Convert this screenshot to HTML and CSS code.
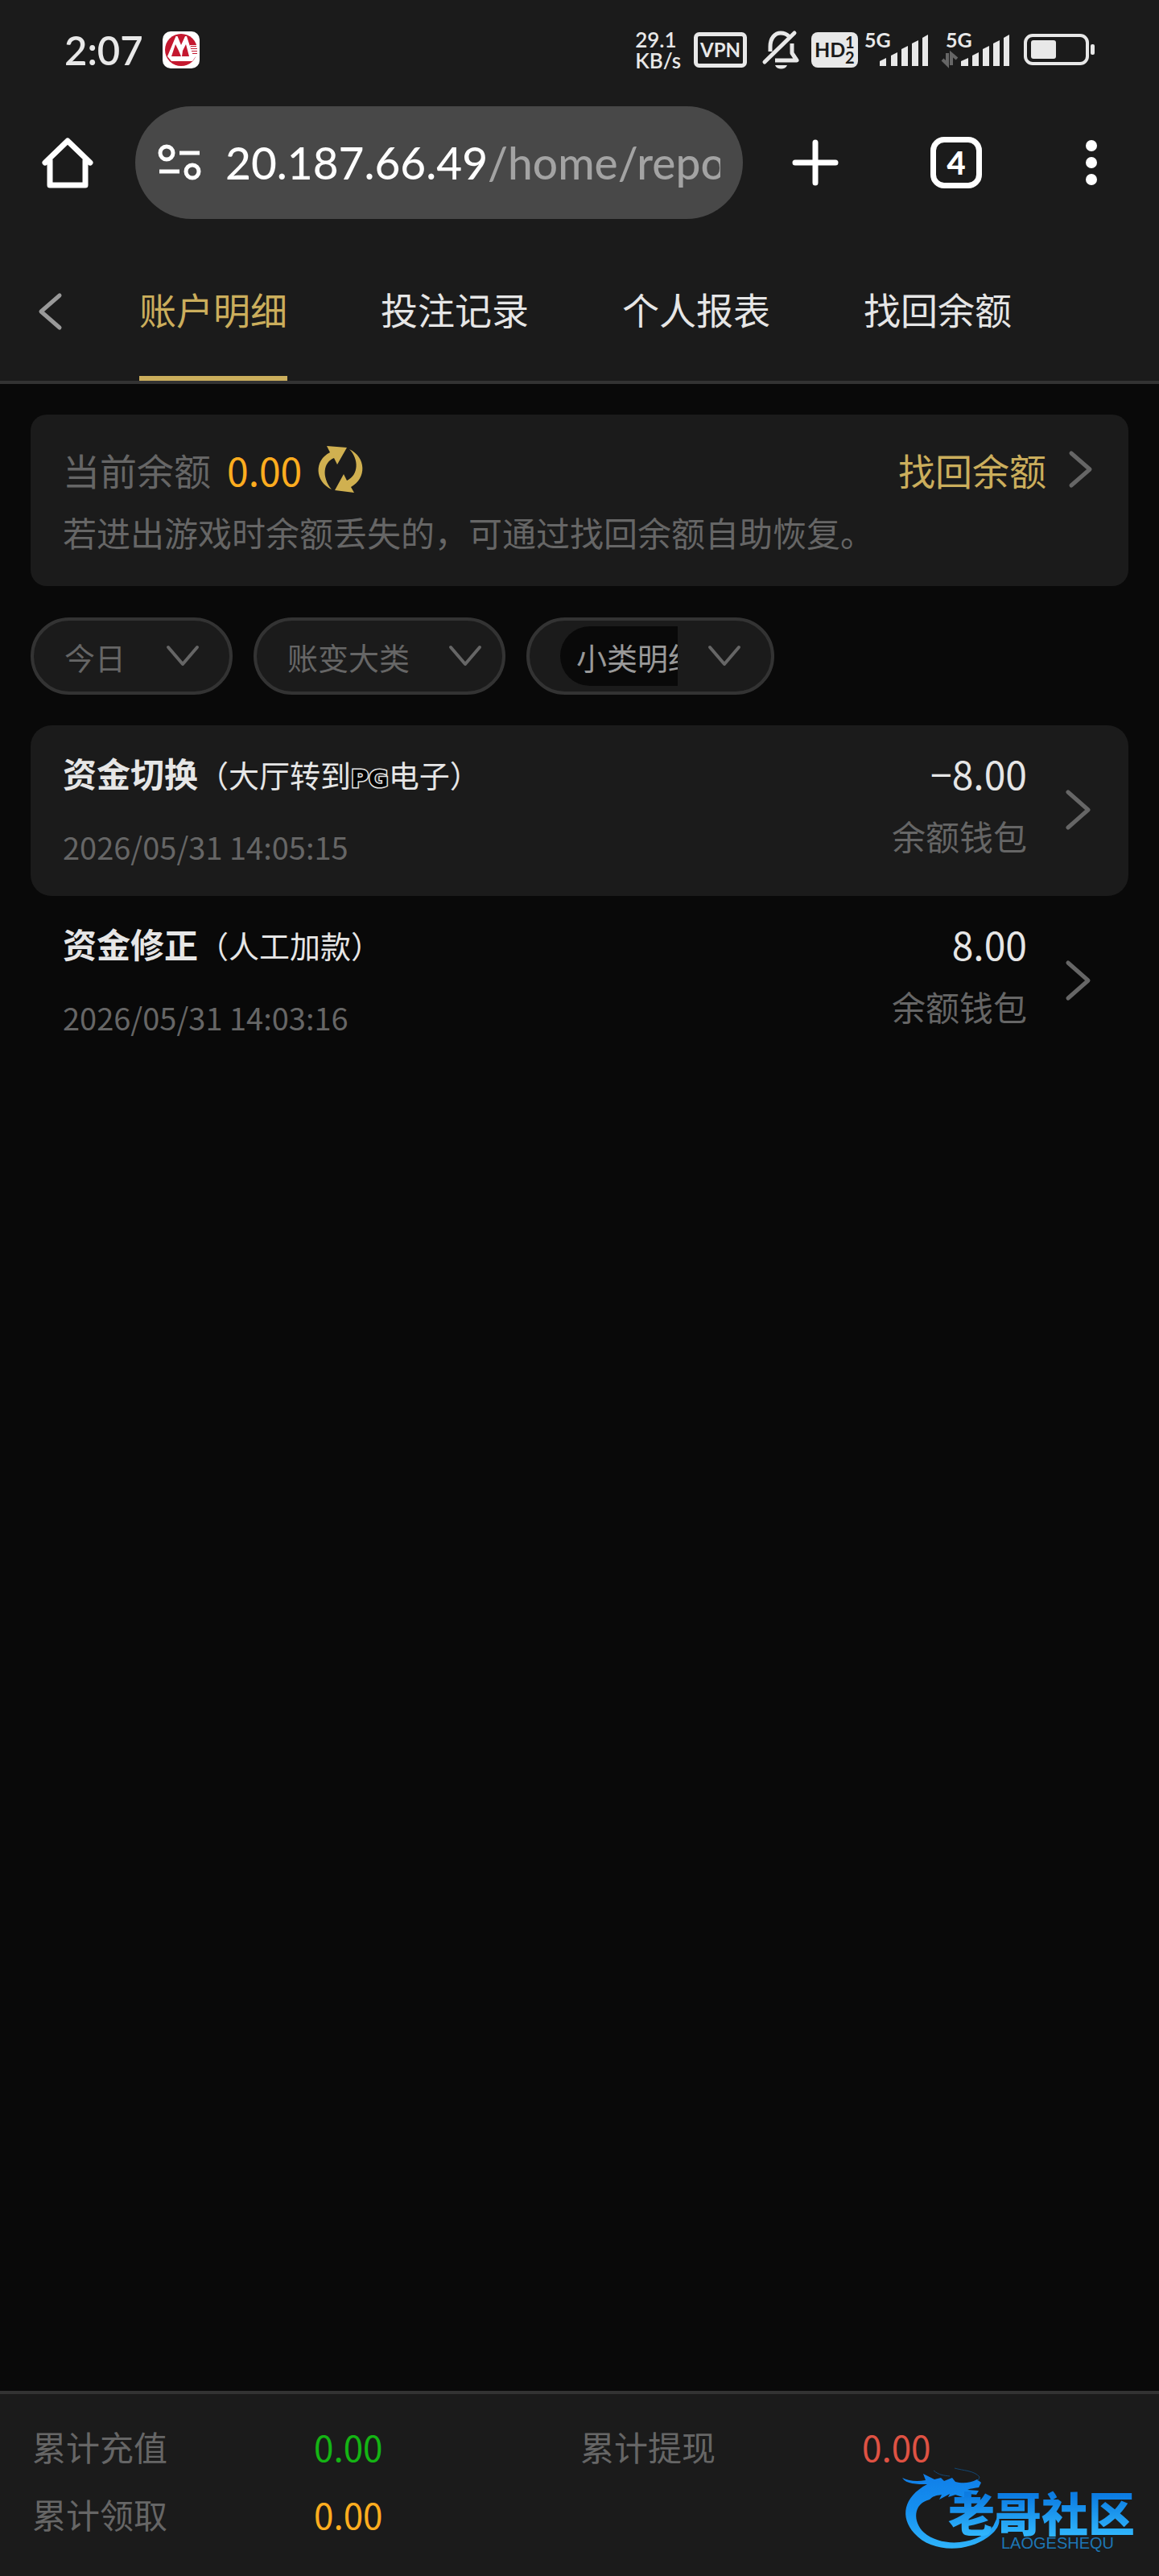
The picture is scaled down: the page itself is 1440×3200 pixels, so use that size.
FILE: index.html
```html
<!DOCTYPE html>
<html lang="zh-CN">
<head>
<meta charset="utf-8">
<meta name="viewport" content="width=device-width, initial-scale=1">
<title>账户明细</title>
<link rel="stylesheet" href="styles.css">
</head>
<body>
<header class="device">
  <div class="status">
    <div class="status-left">
      <time class="clock">2:07</time>
      <svg class="app-badge" width="46" height="46" viewBox="0 0 46 46" aria-hidden="true">
        <rect width="46" height="46" rx="10" fill="#fff"/>
        <circle cx="23" cy="23" r="20" fill="#c4182f"/>
        <path d="M6 31 16.500 6h2L23 17l5-11h2l8 25 4-1-5 7H11l-5-6z" fill="#fff"/>
        <path d="M11 31l5-15 4 8 3 7zM24 31l1-7 4-8 4 15z" fill="#c4182f"/>
        <path d="M34 17h10v14H36z" fill="#fff"/>
        <path d="M35 18.500h7M35 21.500h8M36 24.500h7M37 27.500h6" stroke="#c4182f" stroke-width="1.200"/>
      </svg>
    </div>
    <div class="status-right">
      <div class="speed"><span>29.1</span><span>KB/s</span></div>
      <svg width="66" height="44" viewBox="0 0 66 44" role="img" aria-label="VPN">
        <rect x="2.500" y="2.500" width="61" height="39" rx="4" fill="none" stroke="#e8e8e8" stroke-width="5"/>
        <text class="icon-text" x="33" y="31" font-size="24" text-anchor="middle" fill="#e8e8e8">VPN</text>
      </svg>
      <svg width="48" height="50" viewBox="0 0 48 50" aria-hidden="true">
        <path d="M13 27V21C13 10 19 4 26 4c5 0 8 2 10 4M40 17v12l6 9H19" fill="none" stroke="#e8e8e8" stroke-width="5" stroke-linejoin="round"/>
        <path d="M43 4 6 40" stroke="#e8e8e8" stroke-width="5" stroke-linecap="round"/>
        <path d="M19 44h15c-2 6-13 6-15 0z" fill="#e8e8e8"/>
      </svg>
      <div class="carrier">
        <svg width="58" height="44" viewBox="0 0 58 44" role="img" aria-label="HD">
          <rect width="58" height="44" rx="8" fill="#e8e8e8"/>
          <text class="icon-text" x="4" y="31" font-size="25" fill="#1a1a1a">HD</text>
          <text class="icon-text" x="42" y="20" font-size="20" fill="#1a1a1a">1</text>
          <text class="icon-text" x="42" y="39" font-size="20" fill="#1a1a1a">2</text>
        </svg>
        <svg width="80" height="44" viewBox="0 0 80 44" role="img" aria-label="5G">
          <text class="icon-text" x="0" y="19" font-size="25" fill="#e8e8e8">5G</text>
          <path d="M19 42v-6l8-4v10zM33 42V29l8-4v17zM46 42V21l8-4v25zM59 42V14l8-4v32zM72 42V7l7-4v39z" fill="#e8e8e8"/>
        </svg>
      </div>
      <svg width="86" height="44" viewBox="0 0 86 44" role="img" aria-label="5G">
        <text class="icon-text" x="5" y="19" font-size="25" fill="#e8e8e8">5G</text>
        <path d="M7 26v14L1 34M12 41V27l7 6" fill="none" stroke="#666" stroke-width="4"/>
        <path d="M24 42v-6l9-4v10zM38 42V29l8-4v17zM51 42V21l8-4v25zM64 42V14l8-4v32zM77 42V7l7-4v39z" fill="#e8e8e8"/>
      </svg>
      <svg width="88" height="40" viewBox="0 0 88 40" role="img" aria-label="电量">
        <rect x="2" y="2" width="77" height="35" rx="9" fill="none" stroke="#e8e8e8" stroke-width="4"/>
        <rect x="9" y="8" width="31" height="23" rx="3" fill="#e8e8e8"/>
        <rect x="83" y="13" width="5" height="13" rx="2" fill="#e8e8e8"/>
      </svg>
    </div>
  </div>
  <div class="toolbar">
    <button class="tool" type="button" aria-label="主页">
      <svg width="64" height="64" viewBox="0 0 64 64"><path d="M4 32 32 5l28 27M10 29v31h44V29" fill="none" stroke="#fff" stroke-width="7" stroke-linejoin="round" stroke-linecap="round"/></svg>
    </button>
    <div class="address">
      <svg width="54" height="44" viewBox="0 0 54 44" aria-hidden="true">
        <circle cx="11" cy="10" r="8" fill="none" stroke="#fff" stroke-width="5"/>
        <path d="M27 10h25M2 33h25" stroke="#fff" stroke-width="5"/>
        <circle cx="43" cy="33" r="8" fill="none" stroke="#fff" stroke-width="5"/>
      </svg>
      <input class="url" type="text" aria-label="网址" value="20.187.66.49/home/report">
    </div>
    <div class="tools">
      <button class="tool" type="button" aria-label="新标签页">
        <svg width="56" height="56" viewBox="0 0 56 56"><path d="M28 3v50M3 28h50" stroke="#fff" stroke-width="7" stroke-linecap="round"/></svg>
      </button>
      <button class="tool tab-count" type="button" aria-label="4 个标签页">4</button>
      <button class="tool more" type="button" aria-label="更多">
        <svg width="14" height="56" viewBox="0 0 14 56"><g fill="#fff"><circle cx="7" cy="7" r="7"/><circle cx="7" cy="28" r="7"/><circle cx="7" cy="49" r="7"/></g></svg>
      </button>
    </div>
  </div>
</header>

<nav class="nav">
  <a class="back" href="#" aria-label="返回">
    <svg width="30" height="46" viewBox="0 0 30 46"><path d="M27 3 4 23l23 20" fill="none" stroke="#999" stroke-width="5" stroke-linecap="round" stroke-linejoin="round"/></svg>
  </a>
  <div class="tabs">
    <a class="tab tab-active" href="#" aria-current="page">账户明细</a>
    <a class="tab" href="#">投注记录</a>
    <a class="tab" href="#">个人报表</a>
    <a class="tab" href="#">找回余额</a>
  </div>
</nav>

<main class="main">
  <section class="card">
    <div class="balance">
      <span class="muted">当前余额</span>
      <span class="amount-gold">0.00</span>
      <button class="refresh" type="button" aria-label="刷新余额">
        <svg width="56" height="58" viewBox="0 0 56 58" fill="#d0b050">
          <path d="M11 0 36 2 24 23 20 15C7 20 4 38 17 54 -4 44-5 18 15 8z"/>
          <path d="M39 4C60 14 61 40 41 51L45 58 21 55 32 35 36 43C51 36 51 16 39 4z"/>
        </svg>
      </button>
      <a class="recover" href="#">找回余额
        <svg width="30" height="46" viewBox="0 0 30 46"><path d="M3 3l23 20L3 43" fill="none" stroke="#666" stroke-width="5" stroke-linecap="round" stroke-linejoin="round"/></svg>
      </a>
    </div>
    <p class="hint">若进出游戏时余额丢失的，可通过找回余额自助恢复。</p>
  </section>

  <form class="filters">
    <div class="pill">
      <select aria-label="日期"><option>今日</option></select>
      <svg width="40" height="26" viewBox="0 0 40 26"><path d="M2 2l18 21L38 2" fill="none" stroke="#666" stroke-width="4" stroke-linecap="round" stroke-linejoin="round"/></svg>
    </div>
    <div class="pill pill-wide">
      <select aria-label="账变大类"><option>账变大类</option></select>
      <svg width="40" height="26" viewBox="0 0 40 26"><path d="M2 2l18 21L38 2" fill="none" stroke="#666" stroke-width="4" stroke-linecap="round" stroke-linejoin="round"/></svg>
    </div>
    <div class="pill pill-inset">
      <select aria-label="小类明细"><option>小类明细</option></select>
      <svg width="40" height="26" viewBox="0 0 40 26"><path d="M2 2l18 21L38 2" fill="none" stroke="#666" stroke-width="4" stroke-linecap="round" stroke-linejoin="round"/></svg>
    </div>
  </form>

  <ul class="records">
    <li>
      <a class="record" href="#">
        <div class="what">
          <div class="title"><strong>资金切换</strong>（大厅转到<b class="pg">PG</b>电子）</div>
          <time class="date">2026/05/31 14:05:15</time>
        </div>
        <div class="sum">
          <span class="money">−8.00</span>
          <span class="wallet">余额钱包</span>
        </div>
        <svg width="32" height="50" viewBox="0 0 32 50"><path d="M3 3l25 22L3 47" fill="none" stroke="#666" stroke-width="5" stroke-linecap="round" stroke-linejoin="round"/></svg>
      </a>
    </li>
    <li>
      <a class="record" href="#">
        <div class="what">
          <div class="title"><strong>资金修正</strong>（人工加款）</div>
          <time class="date">2026/05/31 14:03:16</time>
        </div>
        <div class="sum">
          <span class="money">8.00</span>
          <span class="wallet">余额钱包</span>
        </div>
        <svg width="32" height="50" viewBox="0 0 32 50"><path d="M3 3l25 22L3 47" fill="none" stroke="#666" stroke-width="5" stroke-linecap="round" stroke-linejoin="round"/></svg>
      </a>
    </li>
  </ul>
</main>

<footer class="totals">
  <dl class="totals-grid">
    <div class="total"><dt>累计充值</dt><dd class="green">0.00</dd></div>
    <div class="total"><dt>累计提现</dt><dd class="red">0.00</dd></div>
    <div class="total"><dt>累计领取</dt><dd class="orange">0.00</dd></div>
  </dl>
  <svg class="brand" width="340" height="140" viewBox="0 0 340 140" role="img" aria-label="老哥社区">
    <defs>
      <linearGradient id="blue" gradientUnits="userSpaceOnUse" x1="0" y1="10" x2="0" y2="106">
        <stop offset="0" stop-color="#0f7de8"/><stop offset=".5" stop-color="#1590f0"/><stop offset="1" stop-color="#2fb4fb"/>
      </linearGradient>
      <linearGradient id="name" gradientUnits="userSpaceOnUse" x1="0" y1="40" x2="0" y2="88">
        <stop offset="0" stop-color="#0c7ce2"/><stop offset="1" stop-color="#2fb4fb"/>
      </linearGradient>
    </defs>
    <path fill="url(#blue)" d="M21 18c8 4 18 5 29 3l-3-8 14 7 8-2 4 4 10-4 4 5c8 2 18 2 27-3l5 4-3 6c-5 1-10 1-14 3l14 1-3 5-10-1-4 5-12-4-9 3 2-4-13 7 3-6c-8 1-11 2-15 6C34 50 34 73 48 86c22 19 66 16 86-8l6-13c5 10-3 20-13 27-28 20-71 18-91-5C18 67 22 42 52 26c-13 0-26 0-31-8z"/>
    <path fill="none" stroke="#134672" stroke-width="1" d="M60 9c7 6 13 6 20 7M86 6c10 3 25 3 31 11l-2 5"/>
    <text class="brand-name" x="78" y="85" font-size="58" fill="url(#name)">老哥社区</text>
    <text class="brand-latin" x="144" y="106" font-size="20" fill="#1d76b5">LAOGESHEQU</text>
  </svg>
</footer>
</body>
</html>
```
FILE: styles.css
```css
* {
  box-sizing: border-box;
}

body {
  margin: 0;
  min-height: 100vh;
  display: flex;
  flex-direction: column;
  background: #090909;
  color: #e6e6e6;
  font-family: "Noto Sans CJK SC", sans-serif;
  font-size: 42px;
}

a {
  color: inherit;
  text-decoration: none;
}

svg {
  display: block;
  flex: none;
  overflow: visible;
}

button,
input,
select {
  margin: 0;
  padding: 0;
  border: 0;
  background: none;
  color: inherit;
  font: inherit;
}

/* Status bar and browser toolbar */

.device {
  background: #1b1b1b;
  color: #e8e8e8;
  font-family: Lato, sans-serif;
}

.status {
  display: flex;
  justify-content: space-between;
  align-items: center;
  height: 124px;
  padding: 0 80px;
}

.status-left {
  display: flex;
  align-items: center;
  gap: 24px;
}

.clock {
  font-size: 49px;
  font-weight: 600;
}

.status-right {
  display: flex;
  align-items: center;
  gap: 16px;
}

.carrier {
  display: flex;
  gap: 8px;
}

.speed {
  display: flex;
  flex-direction: column;
  font-size: 26px;
  font-weight: 600;
  line-height: 26px;
}

.icon-text {
  font-family: Lato, sans-serif;
  font-weight: 700;
}

.toolbar {
  display: flex;
  align-items: center;
  gap: 52px;
  padding: 8px 77px 28px 52px;
}

.address {
  flex: 1;
  min-width: 0;
  display: flex;
  align-items: center;
  gap: 30px;
  height: 140px;
  padding: 0 28px;
  border-radius: 70px;
  background: #484848;
}

.url {
  flex: 1;
  min-width: 0;
  height: 80px;
  font-size: 55px;
  font-weight: 500;
  color: transparent;
  background: linear-gradient(to right, #fff 325px, #a3a3a3 325px);
  background-clip: text;
}

.tools {
  display: flex;
  align-items: center;
  gap: 115px;
  padding-left: 10px;
}

.tool {
  display: grid;
  place-items: center;
  color: #fff;
}

.more {
  padding-left: 14px;
}

.tab-count {
  width: 64px;
  height: 64px;
  border: 7px solid #fff;
  border-radius: 17px;
  font-size: 40px;
  font-weight: 900;
  line-height: 48px;
}

/* Page navigation */

.nav {
  display: flex;
  align-items: center;
  background: #1b1b1b;
  border-bottom: 4px solid #333;
  font-size: 46px;
}

.back {
  padding: 0 96px 0 47px;
}

.tabs {
  display: flex;
  gap: 116px;
}

.tab {
  line-height: 167px;
  border-bottom: 6px solid transparent;
}

.tab-active {
  color: #cbae5c;
  border-bottom-color: #cbae5c;
}

/* Content */

.main {
  flex: 1;
  padding: 38px;
}

.card {
  padding: 32px 44px 33px 40px;
  border-radius: 20px;
  background: #1b1b1b;
}

.balance {
  display: flex;
  align-items: center;
  gap: 20px;
  font-size: 46px;
  line-height: 72px;
}

.muted,
.hint {
  color: #666;
}

.amount-gold {
  color: #ffad1f;
  font-size: 48px;
}

.recover {
  display: flex;
  align-items: center;
  gap: 28px;
  margin-left: auto;
  color: #cbae5c;
}

.hint {
  margin: 8px 0 0;
  line-height: 68px;
}

.filters {
  display: flex;
  gap: 26px;
  margin: 39px 0 38px;
  font-size: 38px;
}

.pill {
  display: flex;
  align-items: center;
  gap: 50px;
  height: 96px;
  padding: 0 38px;
  border: 4px solid #333;
  border-radius: 48px;
  background: #1b1b1b;
  color: #666;
}

.pill select {
  appearance: none;
  height: 74px;
}

.pill-wide {
  gap: 48px;
  padding-right: 26px;
}

.pill-inset {
  gap: 38px;
}

.pill-inset select {
  width: 146px;
  padding-left: 20px;
  border-radius: 37px 0 0 37px;
  background: #090909;
  color: #999;
}

.records {
  margin: 0;
  padding: 0;
  list-style: none;
}

.record {
  display: flex;
  align-items: center;
  padding: 30px 46px 32px 40px;
  border-radius: 26px;
  line-height: 58px;
}

.records li:nth-child(odd) .record {
  background: #1b1b1b;
}

.what {
  display: flex;
  flex-direction: column;
  gap: 32px;
}

.title {
  font-size: 38px;
}

.title strong {
  font-size: 42px;
}

.pg {
  color: #000;
  font-family: "DejaVu Sans", sans-serif;
  font-size: 30px;
  line-height: 30px;
  -webkit-text-stroke: 3px #e6e6e6;
  paint-order: stroke fill;
}

.date {
  color: #666;
  font-size: 38px;
}

.sum {
  align-self: flex-start;
  display: flex;
  flex-direction: column;
  align-items: flex-end;
  gap: 20px;
  margin: 0 48px 0 auto;
}

.money {
  font-size: 48px;
}

.wallet {
  color: #666;
}

/* Totals bar */

.totals {
  position: relative;
  padding: 23px 38px 35px 40px;
  border-top: 4px solid #333;
  background: #1b1b1b;
}

.totals-grid {
  display: grid;
  grid-template-columns: 1fr 1fr;
  margin: 0;
  line-height: 84px;
}

.total {
  display: flex;
}

.total dt {
  flex: 0 0 350px;
  color: #666;
}

.total dd {
  margin: 0;
  font-size: 44px;
}

.green {
  color: #14b414;
}

.red {
  color: #df5243;
}

.orange {
  color: #ffad1f;
}

.brand {
  position: absolute;
  right: 0;
  bottom: 0;
}

.brand-name {
  font-family: "Noto Sans CJK SC", sans-serif;
  font-weight: 900;
}

.brand-latin {
  font-family: "Liberation Sans", sans-serif;
}
```
